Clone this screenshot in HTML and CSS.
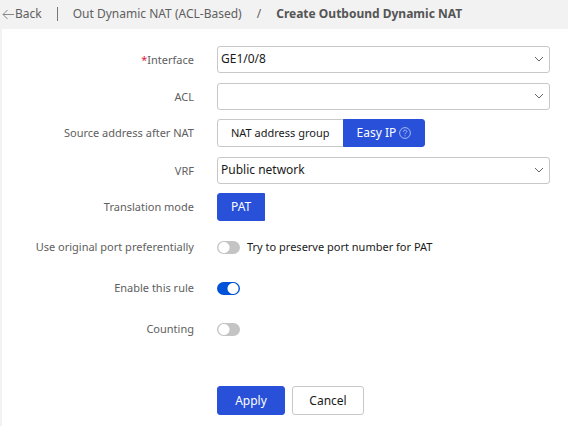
FILE: index.html
```html
<!DOCTYPE html>
<html lang="en">
<head>
	<meta charset="UTF-8">
	<title>Create Outbound Dynamic NAT</title>
	<link rel="stylesheet" href="styles.css">
</head>
<body>
	<nav class="crumbs">
		<a class="back" href="#">
			<svg width="12" height="12" viewBox="0 0 12 12"><path d="M12 6.500H1M5.500 2L1 6.500 5.500 11"/></svg>Back</a>
		<span class="bar"></span>
		<a href="#">Out Dynamic NAT (ACL-Based)</a>
		<span class="slash">/</span>
		<b>Create Outbound Dynamic NAT</b>
	</nav>
	<form class="box">
		<div class="row">
			<label class="name" for="interface"><span class="red">*</span>Interface</label>
			<div class="select">
				<select id="interface"><option>GE1/0/8</option></select>
				<svg class="arrow" width="10" height="6" viewBox="0 0 10 6"><path d="M1 1l4 4 4-4"/></svg>
			</div>
		</div>
		<div class="row">
			<label class="name" for="acl">ACL</label>
			<div class="select">
				<select id="acl"><option></option></select>
				<svg class="arrow" width="10" height="6" viewBox="0 0 10 6"><path d="M1 1l4 4 4-4"/></svg>
			</div>
		</div>
		<div class="row group-row">
			<span class="name" id="source">Source address after NAT</span>
			<div class="group" role="group" aria-labelledby="source">
				<button type="button">NAT address group</button>
				<button type="button" class="on">Easy IP
					<svg class="help" width="12" height="12" viewBox="0 0 12 12"><circle cx="6" cy="6" r="5.400"/><path d="M4.300 4.800c0-2.300 3.500-2.200 3.500-.2C7.800 5.800 6 5.800 6 7.300M6 8.300v1"/></svg>
				</button>
			</div>
		</div>
		<div class="row">
			<label class="name" for="vrf">VRF</label>
			<div class="select">
				<select id="vrf"><option>Public network</option></select>
				<svg class="arrow" width="10" height="6" viewBox="0 0 10 6"><path d="M1 1l4 4 4-4"/></svg>
			</div>
		</div>
		<div class="row group-row">
			<span class="name" id="mode">Translation mode</span>
			<div class="group" role="group" aria-labelledby="mode">
				<button type="button" class="on">PAT</button>
			</div>
		</div>
		<div class="row switch-row">
			<label class="name" for="port">Use original port preferentially</label>
			<div class="field">
				<input type="checkbox" class="switch" id="port">
				<label for="port">Try to preserve port number for PAT</label>
			</div>
		</div>
		<div class="row switch-row">
			<label class="name" for="enable">Enable this rule</label>
			<div class="field"><input type="checkbox" class="switch" id="enable" checked></div>
		</div>
		<div class="row switch-row">
			<label class="name" for="counting">Counting</label>
			<div class="field"><input type="checkbox" class="switch" id="counting"></div>
		</div>
		<div class="row btns">
			<div class="field">
				<button type="submit" class="apply">Apply</button>
				<button type="button" class="cancel">Cancel</button>
			</div>
		</div>
	</form>
</body>
</html>
```
FILE: styles.css
```css
*{margin:0;padding:0;box-sizing:border-box;}
body{font:12px/16px "Noto Sans","Open Sans",sans-serif;color:#1a1a1a;background-color:#fff;}
svg{fill:none;stroke:currentColor;}
button,select{font:inherit;color:inherit;background-color:#fff;border:1px solid #c8c8c8;}

/* breadcrumb */
.crumbs{display:flex;align-items:center;height:29px;padding:0 2px 2px;background-color:#f2f2f2;color:#606060;white-space:nowrap;}
.crumbs a{color:inherit;text-decoration:none;}
.crumbs b{color:#555;font-weight:bold;}
.back{display:flex;align-items:center;}
.back svg{margin-right:1px;stroke:#888;}
.bar{width:1px;height:14px;margin:0 15px;background-color:#777;}
.slash{margin:0 15px;}

/* form */
.box{border-left:2px solid #f2f2f2;padding:17px 18px 12px 0;min-height:calc(100vh - 29px);}
.row{display:grid;grid-template-columns:192px 1fr;column-gap:23px;align-items:center;min-height:27px;margin-bottom:10px;}
.name{text-align:right;color:#606060;}
.name,.group,.field label{font-size:11px;}
.red{color:#e02040;}
.select{position:relative;}
.select select{display:block;width:100%;height:27px;padding:0 24px 2px 3px;border-radius:3px;appearance:none;}
.arrow{position:absolute;right:6px;top:10px;color:#666;pointer-events:none;}

.group-row{margin-top:-1px;}
.group{display:flex;}
.group button{display:flex;align-items:center;gap:3px;height:28px;padding:0 13px;white-space:nowrap;}
.group button:first-child{border-radius:3px 0 0 3px;}
.group button + button{margin-left:-1px;border-radius:0 3px 3px 0;}
.group .on{font-size:12px;background-color:#2850d8;border-color:#2850d8;color:#fff;}
.help{opacity:0.6;}

.switch-row{min-height:26px;margin:13px 0 15px;}
.field{display:flex;align-items:center;}
.switch{width:23px;height:13px;margin-right:7px;border-radius:7px;appearance:none;background:radial-gradient(circle at 7px 50%,#fff 5px,#c4c4c4 6px);}
.switch:checked{background:radial-gradient(circle at 16px 50%,#fff 5px,#0052d9 6px);}

.btns{margin:44px 0 0;}
.btns .field{grid-column:2;gap:7px;}
.btns button{height:29px;border-radius:3px;}
.btns .apply{width:68px;background-color:#2850d8;border-color:#2850d8;color:#fff;}
.btns .cancel{width:72px;}
```
